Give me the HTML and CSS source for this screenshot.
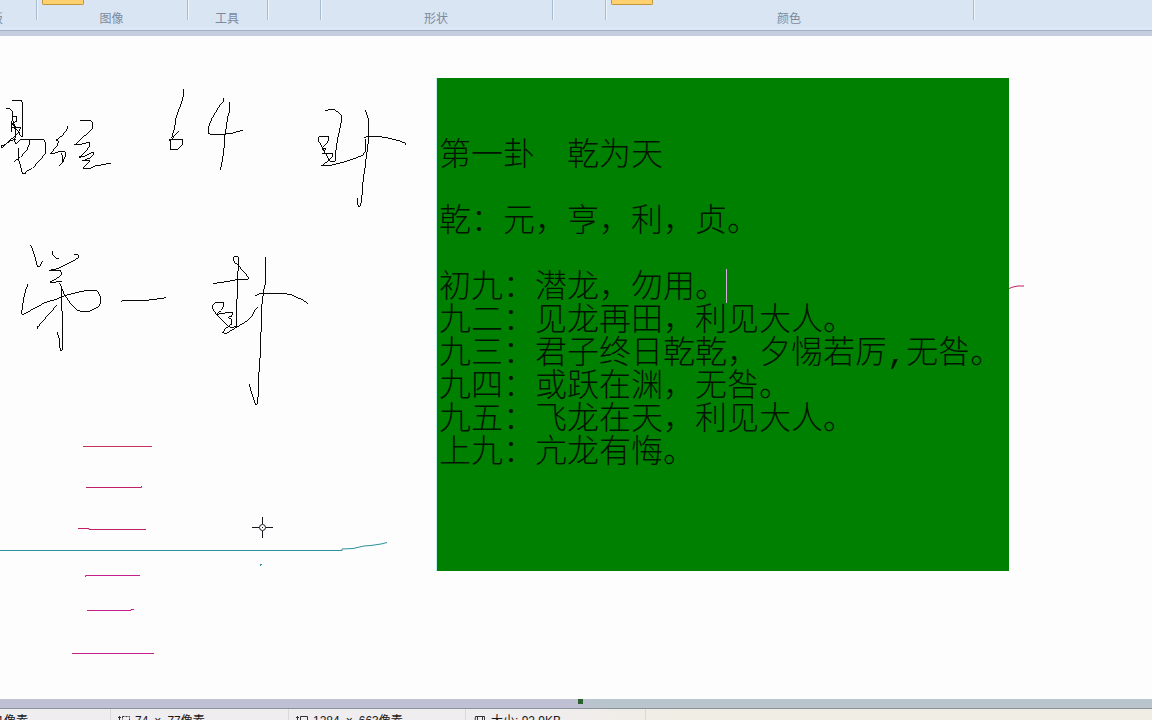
FILE: index.html
```html
<!DOCTYPE html>
<html lang="zh-CN">
<head>
<meta charset="utf-8">
<title>画图</title>
<link rel="stylesheet" href="styles.css">
</head>
<body>
<header class="ribbon">
  <section class="group group-clipboard"><span class="group-label">板</span></section>
  <section class="group group-image"><button class="tool" type="button" aria-label="选择"></button><span class="group-label">图像</span></section>
  <section class="group group-tools"><span class="group-label">工具</span></section>
  <section class="group group-narrow"></section>
  <section class="group group-shapes"><span class="group-label">形状</span></section>
  <section class="group group-narrow"></section>
  <section class="group group-colors"><button class="tool" type="button" aria-label="颜色 1"></button><span class="group-label">颜色</span></section>
</header>

<main class="workspace">
  <svg class="drawing" width="1152" height="663" viewBox="0 36 1152 663" aria-hidden="true">
    <g class="ink">
      <g transform="translate(0 80) scale(.3333)">
        <path d="M37 63L43 61H63L68 67V168L62 169L57 157L47 147L36 130M19 85L31 87L38 96V120L34 125V157M36 109H50V123L40 130L47 142H62L53 160L20 190L5 205L3 198L17 193L32 182L49 178M38 120L43 142L48 151L44 184L49 193L61 178H130L137 188V218L122 239L97 265L82 273L75 281H68L64 268L57 242V205M88 180V194L79 213L61 232L43 244M34 142H62"/>
        <path d="M203 138V145L194 157L186 168L177 174L169 180L177 184L171 197L151 222L160 221L176 215H196V228L190 244L178 257L187 247L189 231L184 219M240 122H274L278 130L276 146L266 158L247 173L235 186L223 195L245 192L268 187V200L253 219L236 233L258 227L279 216L282 221L272 233L247 243H271L260 252L249 265H271L288 257L310 254L333 249"/>
      </g>
      <g transform="translate(150 80) scale(.3333)">
        <path d="M101 27V45L96 63L86 91L77 117L74 143L65 174M87 153L65 177L61 182L56 180L65 178H97V194L88 205L80 209H62V181"/>
        <path d="M221 54V63L208 78L196 98L184 119L176 142V161L181 163H222L248 159L279 151M239 66V91L233 111L228 146L225 166L222 205L218 237L211 269"/>
        <path d="M526 92L541 88H551L566 97L575 106V120L570 146L563 174L558 211L556 244L540 243L533 233L526 219L516 207L522 198L530 190L536 181V169H508L505 175L507 185L515 198L521 213L527 207L518 205M516 219L547 220V231L536 242L514 258L538 257L575 248L607 238L639 226L647 211L648 178"/>
        <path d="M646 90L654 113L656 126V163L653 206L649 228L645 265L640 292L638 324L635 356L632 376L626 381L622 371V353M643 173L651 169H686L723 176L751 183L766 190V196"/>
      </g>
      <g transform="translate(0 235) scale(.3333)">
        <path d="M92 30L101 52L112 94L119 95L128 77M158 48V59L168 70H178M223 59L235 60L234 69L218 79L190 93L169 102L146 106H181L185 117L176 127L149 142L185 140M84 148L77 164L70 196L65 234L68 240L99 222L135 203L171 192L201 180L245 169L271 166L291 167L298 178L302 190V204L294 217L269 228L250 230L232 226L215 210L205 195L194 181L188 166L181 147L177 143L185 155V213L187 239V344L181 347L177 310L172 291M169 211L155 229L133 253L111 279L113 274L111 281M363 199L370 197H426L459 194L498 188"/>
      </g>
      <g transform="translate(190 240) scale(.3333)">
        <path d="M146 76L134 68L129 55L133 49L145 51L146 76L142 113V152L140 202L139 260L122 263L112 256L91 236L77 220L68 207L67 196L76 189L101 186V198L94 211L80 223L104 219H128L125 229L115 232L123 238L125 252L108 265L97 278L108 281L128 269L151 255L171 243L185 230L192 215L203 202M145 77L167 101L177 115L173 118H145L121 123L95 127L70 131"/>
        <path d="M227 51V128L221 152L217 183L214 210V266L211 302V342L208 380L205 429V459L202 493L196 492L190 474L183 454L178 432M195 167L208 162H291L303 163L314 170L334 177L345 184L353 191"/>
      </g>
    </g>
    <g class="marks">
      <path class="mark-red" d="M83 446.500H152"/>
      <path class="mark-rose" d="M86 487.500H141.500V486M78 528.500H89V529.500H146M1009 288.500L1013 287L1018 286H1024"/>
      <path class="mark-pink" d="M85.500 577V575.500H140M87 610.500H131V609.500H134M72 653.500H154"/>
      <path class="mark-teal" d="M0 550.500H342V549L353 548.500L364 546L371 545.500L381 544L387 542.500M260 564.500H262M260 566L262 564"/>
    </g>
    <g class="cursor">
      <path d="M262.500 517V524M262.500 531V538M252 527.500H259M266 527.500H273M262 527.500H263"/>
      <circle cx="262.500" cy="527.500" r="3"/>
    </g>
  </svg>
  <div class="textbox">
    <textarea class="text" aria-label="文本" spellcheck="false">第一卦　乾为天

乾：元，亨，利，贞。

初九：潜龙，勿用。
九二：见龙再田，利见大人。
九三：君子终日乾乾，夕惕若厉,无咎。
九四：或跃在渊，无咎。
九五：飞龙在天，利见大人。
上九：亢龙有悔。</textarea>
    <span class="caret"></span>
  </div>
</main>

<div class="splitter"><span class="handle"></span></div>

<footer class="status">
  <div class="cell cell-position">1像素</div>
  <div class="cell cell-selection">
    <svg class="icon" width="14" height="12" viewBox="0 0 14 12"><path d="M2.500 1V11M1 2.500H4"/><path stroke-dasharray="2 1" d="M5.500 1.500H12.500V10.500H5.500Z"/></svg>
    <span>74<span class="times">×</span>77像素</span>
  </div>
  <div class="cell cell-canvas">
    <svg class="icon" width="14" height="12" viewBox="0 0 14 12"><path d="M2.500 1V11M1 2.500H4M5.500 1.500H12.500V10.500H5.500Z"/></svg>
    <span>1284<span class="times">×</span>663像素</span>
  </div>
  <div class="cell cell-size">
    <svg class="icon" width="14" height="12" viewBox="0 0 14 12"><path d="M2.500 1.500H11.500V11M2.500 1.500L1.500 11M4.500 2V6H9.500V2"/></svg>
    <span>大小: 92.9KB</span>
  </div>
</footer>
</body>
</html>
```
FILE: styles.css
```css
* {
  box-sizing: border-box;
}

body {
  margin: 0;
  height: 100vh;
  overflow: hidden;
  display: flex;
  flex-direction: column;
  background: #fdfdfd;
  font: 12px/14px "Liberation Sans", "Noto Sans CJK SC", sans-serif;
}

.ribbon {
  flex: none;
  display: flex;
  height: 36px;
  padding-bottom: 9px;
  background: linear-gradient(#d9e5f3 0 27px, #dce8f5 27px 30px, #9db1c2 30px 31px, #c5cede 31px);
}

.group {
  flex: none;
  position: relative;
  display: flex;
  justify-content: center;
  align-items: flex-end;
  padding: 0 2px 1px 0;
}

.group::after {
  content: "";
  position: absolute;
  top: 0;
  right: 0;
  width: 1px;
  height: 20px;
  background: #a9bbce;
  box-shadow: 1px 0 #edf4fb;
}

.group-clipboard {
  width: 37px;
  justify-content: flex-end;
  padding-right: 34px;
}

.group-image { width: 151px; }
.group-tools { width: 80px; }
.group-narrow { width: 53px; }
.group-shapes { width: 232px; }
.group-colors { width: 368px; }

.group-label {
  color: #7b8a9d;
  white-space: nowrap;
}

.tool {
  position: absolute;
  top: 0;
  left: 5px;
  width: 42px;
  height: 5px;
  padding: 0;
  border: 1px solid #bd963f;
  border-top: 0;
  border-radius: 0 0 2px 2px;
  background: #ffd06d;
}

.workspace {
  flex: 1;
  min-height: 0;
  position: relative;
  overflow: hidden;
}

.drawing {
  display: block;
  fill: none;
}

.ink {
  stroke: #080808;
  stroke-width: 3;
  shape-rendering: crispEdges;
}

.marks {
  stroke-width: 1;
}

.mark-red { stroke: #c8325a; }
.mark-rose { stroke: #c02068; }
.mark-pink { stroke: #c4208c; }
.mark-teal { stroke: #2c9199; }

.cursor {
  stroke: #17131b;
}

.textbox {
  position: absolute;
  top: 42px;
  left: 437px;
  width: 572px;
  height: 493px;
  background: #008000;
  box-shadow: -1px 0 #c0f0ee;
}

.text {
  display: block;
  width: 100%;
  height: 100%;
  margin: 0;
  padding: 62px 0 0 2px;
  border: 0;
  outline: 0;
  resize: none;
  overflow: hidden;
  background: transparent;
  color: #001500;
  font: 300 32px/33px "Liberation Mono", "Noto Sans CJK SC", monospace;
}

.caret {
  position: absolute;
  top: 191px;
  left: 289px;
  width: 1px;
  height: 34px;
  background: #d9a9dc;
}

.splitter {
  flex: none;
  display: flex;
  justify-content: center;
  height: 10px;
  padding-left: 8px;
  border-bottom: 1px solid #8b9299;
  background: linear-gradient(90deg, #bfc0d3 0 50%, #b8c5cd 52%);
}

.handle {
  width: 5px;
  height: 5px;
  background: #2e602f;
}

.status {
  flex: none;
  display: flex;
  height: 11px;
  overflow: hidden;
  background: linear-gradient(90deg, #efedf0 0 45%, #f0ede5 58%);
  color: #171717;
}

.cell {
  flex: none;
  display: flex;
  align-items: flex-start;
  gap: 4px;
  height: 20px;
  padding: 5px 0 0 6px;
  border-right: 1px solid #d9d9dc;
  white-space: nowrap;
}

.cell-position {
  width: 111px;
  justify-content: flex-end;
  padding: 5px 82px 0 0;
}

.cell-selection { width: 178px; }
.cell-canvas { width: 177px; }
.cell-size { width: 180px; padding-left: 7px; }

.times {
  margin: 0 6px;
}

.icon {
  flex: none;
  margin-top: 1px;
  fill: none;
  stroke: #333;
}
```
